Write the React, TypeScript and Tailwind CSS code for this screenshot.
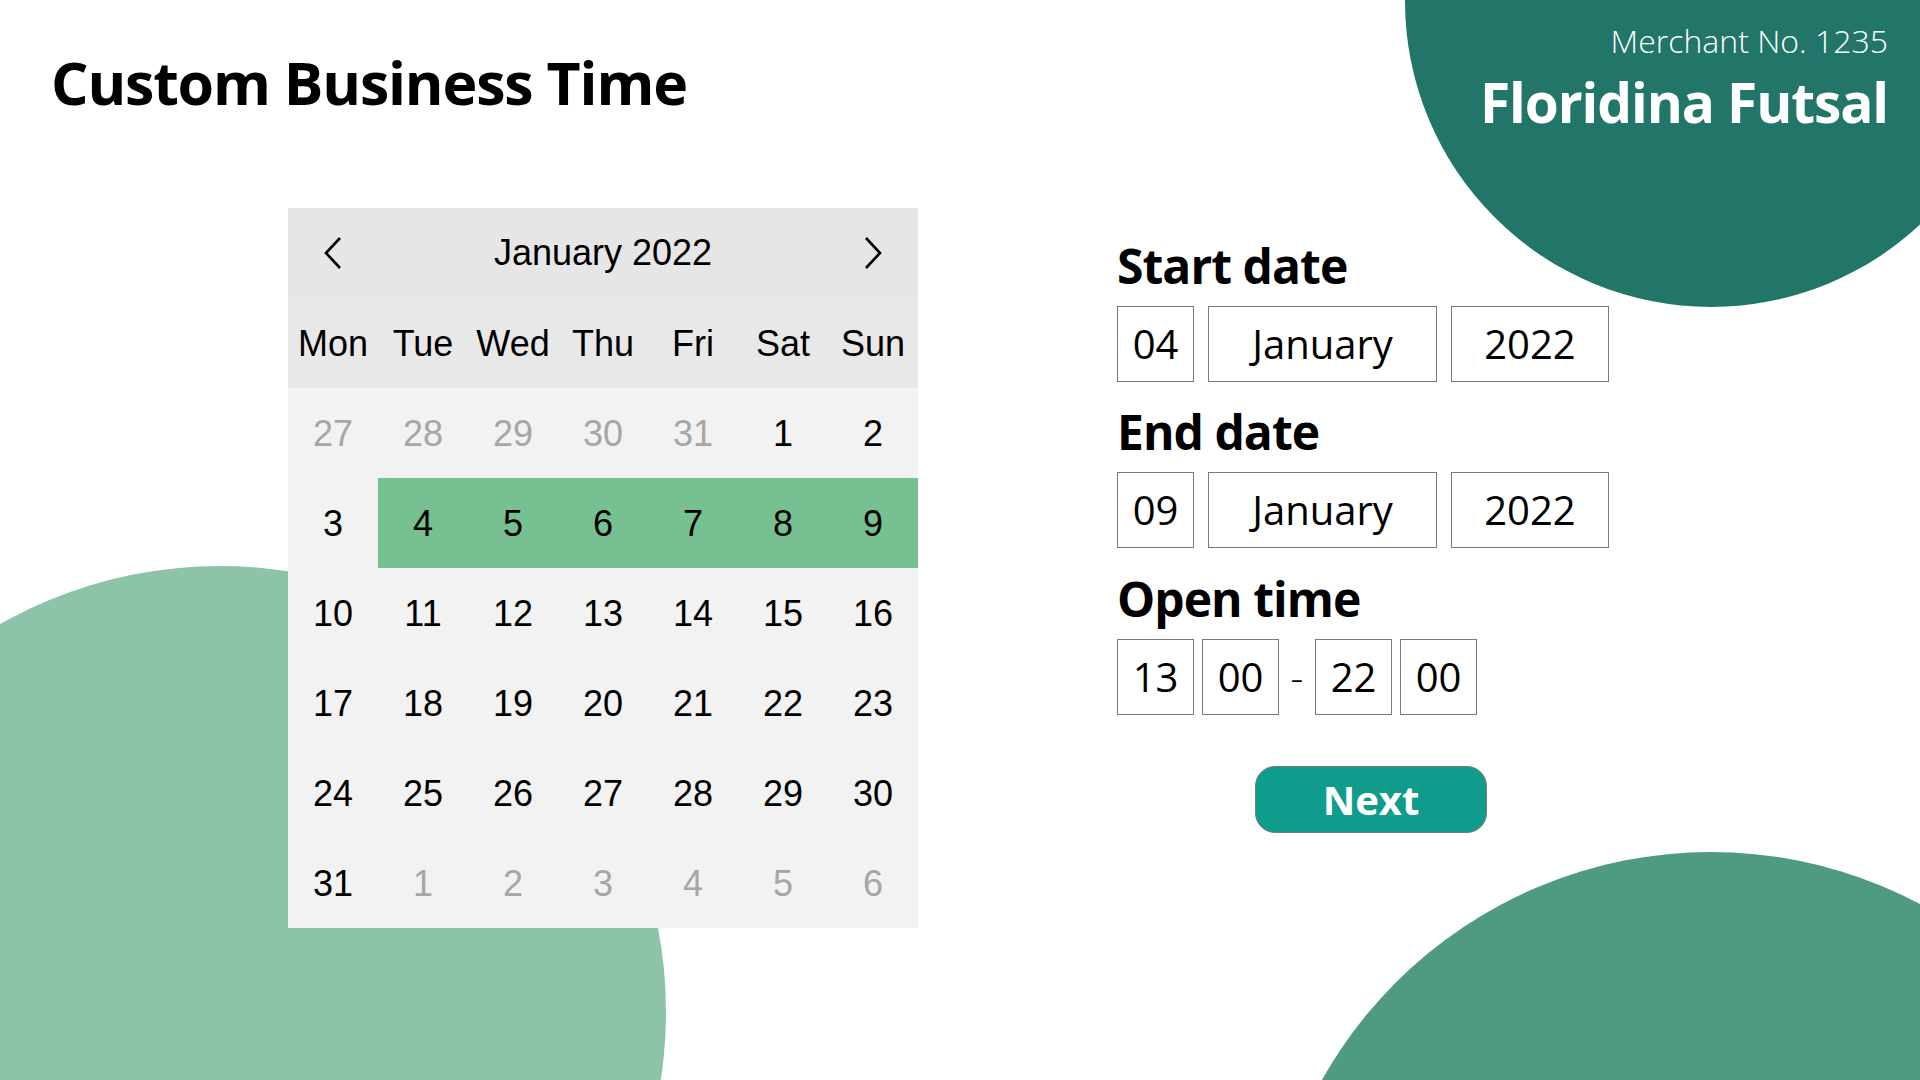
import React from "react";

type Day = { n: number; muted?: boolean };

const weekdays = ["Mon", "Tue", "Wed", "Thu", "Fri", "Sat", "Sun"];

const weeks: Day[][] = [
    [{ n: 27, muted: true }, { n: 28, muted: true }, { n: 29, muted: true }, { n: 30, muted: true }, { n: 31, muted: true }, { n: 1 }, { n: 2 }],
    [{ n: 3 }, { n: 4 }, { n: 5 }, { n: 6 }, { n: 7 }, { n: 8 }, { n: 9 }],
    [{ n: 10 }, { n: 11 }, { n: 12 }, { n: 13 }, { n: 14 }, { n: 15 }, { n: 16 }],
    [{ n: 17 }, { n: 18 }, { n: 19 }, { n: 20 }, { n: 21 }, { n: 22 }, { n: 23 }],
    [{ n: 24 }, { n: 25 }, { n: 26 }, { n: 27 }, { n: 28 }, { n: 29 }, { n: 30 }],
    [{ n: 31 }, { n: 1, muted: true }, { n: 2, muted: true }, { n: 3, muted: true }, { n: 4, muted: true }, { n: 5, muted: true }, { n: 6, muted: true }],
];

// selected range: 4 - 9 January
const isSelected = (w: number, d: number) => w === 1 && d >= 1;

function Chevron({ dir }: { dir: "left" | "right" }) {
    return (
        <svg width="22" height="34" viewBox="0 0 22 34" fill="none" stroke="#000" strokeWidth="2.6">
            {dir === "left" ? <path d="M18 2 L4 17 L18 32" /> : <path d="M4 2 L18 17 L4 32" />}
        </svg>
    );
}

function Calendar() {
    return (
        <div className="w-[630px] font-['Liberation_Sans',Arial,sans-serif] text-[36px] text-black">
            {/* month header */}
            <div className="grid grid-cols-7 h-[90px] bg-[#e6e6e6] items-center">
                <div className="flex justify-center">
                    <Chevron dir="left" />
                </div>
                <div className="col-span-5 text-center">January 2022</div>
                <div className="flex justify-center">
                    <Chevron dir="right" />
                </div>
            </div>

            {/* weekday row */}
            <div className="grid grid-cols-7 h-[90px] bg-[#e8e8e8]">
                {weekdays.map((d) => (
                    <div key={d} className="flex items-center justify-center pt-[2px]">
                        {d}
                    </div>
                ))}
            </div>

            {/* days */}
            <div className="bg-[#f2f2f2]">
                {weeks.map((week, wi) => (
                    <div key={wi} className="grid grid-cols-7 h-[90px]">
                        {week.map((day, di) => (
                            <div
                                key={di}
                                className={`flex items-center justify-center pt-[1px] ${isSelected(wi, di) ? "bg-[#76c092]" : ""} ${day.muted ? "text-[#a6a6a6]" : "text-black"}`}
                            >
                                {day.n}
                            </div>
                        ))}
                    </div>
                ))}
            </div>
        </div>
    );
}

function Box({ w, children }: { w: string; children: React.ReactNode }) {
    return (
        <div className={`${w} h-[76px] border border-[#7a7a7a] bg-white flex items-center justify-center text-[40px] font-normal text-black`}>
            {children}
        </div>
    );
}

function Label({ children }: { children: React.ReactNode }) {
    return <h2 className="text-[48px] leading-none font-bold tracking-[-0.02em] text-black">{children}</h2>;
}

function DateRow({ day, month, year }: { day: string; month: string; year: string }) {
    return (
        <div className="flex gap-[14px] mt-[16px]">
            <Box w="w-[77px]">{day}</Box>
            <Box w="w-[229px]">{month}</Box>
            <Box w="w-[158px]">{year}</Box>
        </div>
    );
}

export default function App() {
    return (
        <div className="relative w-[1920px] h-[1080px] overflow-hidden bg-white font-['Open_Sans',sans-serif]">
            {/* background circles */}
            <div className="absolute left-[1405px] top-[-305px] w-[612px] h-[612px] rounded-full bg-[#227569]" />
            <div className="absolute left-[-226px] top-[566px] w-[892px] h-[892px] rounded-full bg-[#8dc3a8]" />
            <div className="absolute left-[1265px] top-[852px] w-[892px] h-[892px] rounded-full bg-[#4f9b82]" />

            <div className="relative z-10 flex flex-col">
                {/* header */}
                <div className="h-[208px] flex justify-between items-start">
                    <h1 className="ml-[51px] mt-[53px] text-[59px] leading-none font-bold tracking-[-0.02em] text-black">
                        Custom Business Time
                    </h1>
                    <div className="mr-[32px] text-right text-white">
                        <div className="mt-[25px] text-[32px] leading-none font-light">Merchant No. 1235</div>
                        <div className="mt-[17px] text-[55px] leading-none font-bold tracking-[-0.02em]">Floridina Futsal</div>
                    </div>
                </div>

                {/* body */}
                <div className="flex items-start">
                    <div className="ml-[288px]">
                        <Calendar />
                    </div>

                    <div className="ml-[199px] mt-[34px] flex flex-col">
                        <Label>Start date</Label>
                        <DateRow day="04" month="January" year="2022" />

                        <div className="mt-[26px]">
                            <Label>End date</Label>
                        </div>
                        <DateRow day="09" month="January" year="2022" />

                        <div className="mt-[27px]">
                            <Label>Open time</Label>
                        </div>
                        <div className="flex items-center gap-[8px] mt-[16px]">
                            <Box w="w-[77px]">13</Box>
                            <Box w="w-[77px]">00</Box>
                            <span className="w-[20px] text-center text-[40px] font-light text-black">-</span>
                            <Box w="w-[77px]">22</Box>
                            <Box w="w-[77px]">00</Box>
                        </div>

                        <button className="ml-[138px] mt-[51px] w-[232px] h-[67px] rounded-[20px] border border-[#7a7a7a] bg-[#109c8c] text-white text-[40px] font-bold leading-none font-['Comic_Sans_MS','Open_Sans',sans-serif]">
                            Next
                        </button>
                    </div>
                </div>
            </div>
        </div>
    );
}
